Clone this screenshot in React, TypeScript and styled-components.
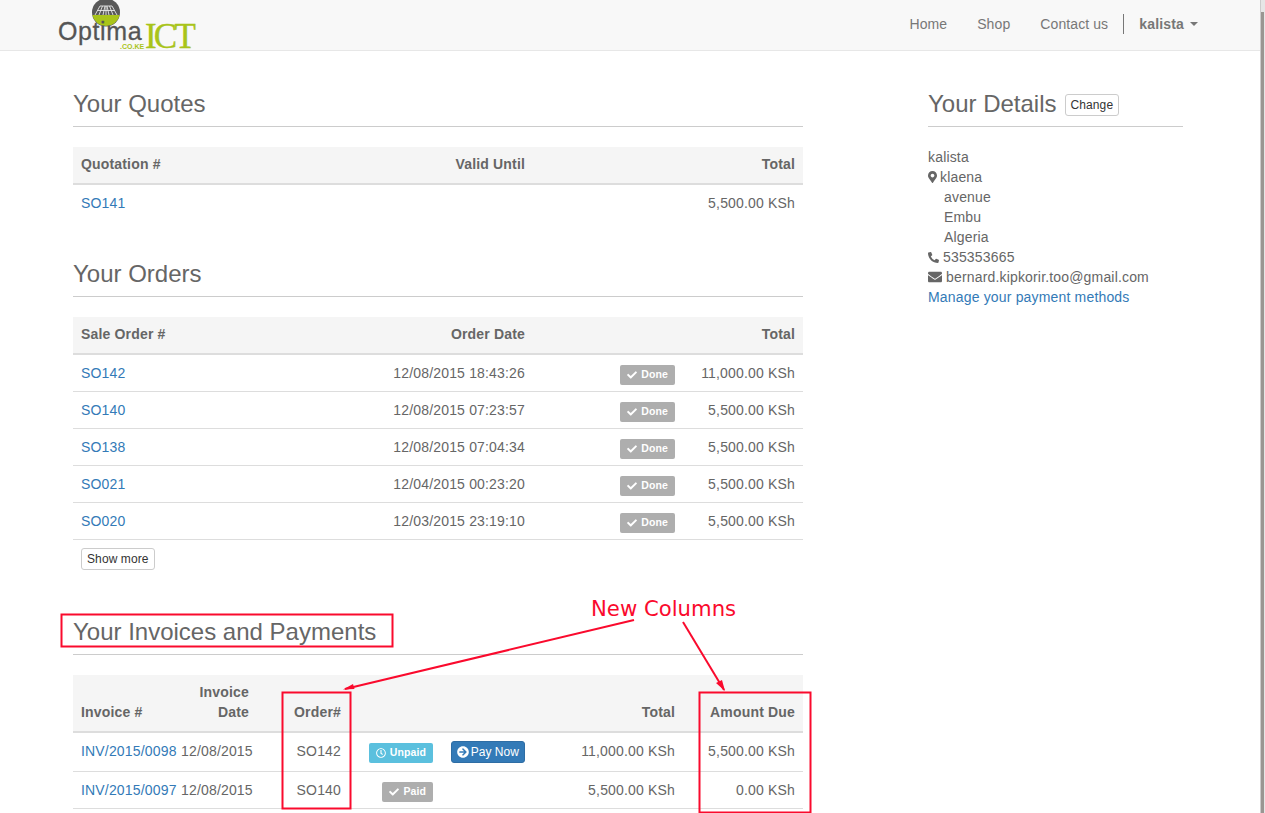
import styled, { createGlobalStyle } from 'styled-components';
import { FaCheck, FaRegClock, FaEnvelope, FaMapMarkerAlt, FaPhoneAlt, FaArrowCircleRight } from 'react-icons/fa';

const GlobalStyle = createGlobalStyle`
  html, body {
    margin: 0;
    height: 813px;
    overflow: hidden;
    background: #fff;
  }
  body {
    font-family: "Liberation Sans", Arial, sans-serif;
    font-size: 14px;
    line-height: 20px;
    letter-spacing: 0.17px;
    color: #666;
  }
  * { box-sizing: border-box; }
`;

const Page = styled.div`
  position: relative;
  width: 1265px;
  height: 813px;
  overflow: hidden;
`;

const Navbar = styled.nav`
  height: 51px;
  background: #f8f8f8;
  border-bottom: 1px solid #e7e7e7;
  display: flex;
  align-items: center;
  padding: 0 67px 0 57px;
  justify-content: space-between;
`;

const Brand = styled.div`
  position: relative;
  width: 140px;
  height: 50px;
`;

const BrandMain = styled.span`
  position: absolute;
  left: 1px;
  top: 19px;
  font-size: 25px;
  line-height: 24px;
  color: #555;
  letter-spacing: 0.6px;
  -webkit-text-stroke: 0.3px #555;
`;

const BrandIct = styled.span`
  position: absolute;
  left: 88px;
  top: 22px;
  font-family: "Liberation Serif", serif;
  font-size: 35px;
  line-height: 30px;
  letter-spacing: -2.8px;
  color: #a9c41a;
  -webkit-text-stroke: 0.4px #a9c41a;
`;

const BrandTld = styled.span`
  position: absolute;
  left: 63px;
  top: 43px;
  font-size: 7px;
  line-height: 7px;
  font-weight: bold;
  letter-spacing: 0;
  color: #a9c41a;
`;

const BrandMark = styled.svg`
  position: absolute;
  left: 34px;
  top: 0;
`;

const NavLinks = styled.div`
  display: flex;
  align-items: center;
  margin-bottom: 2px;
  color: #777;
`;

const NavLink = styled.a`
  margin-right: 30px;
  letter-spacing: 0.1px;
  color: #777;
  &:nth-child(3) { margin-right: 15px; }
`;

const UserMenu = styled.span`
  display: flex;
  align-items: center;
  height: 20px;
  border-left: 1px solid #777;
  padding-left: 15px;
  font-weight: bold;
  color: #777;
`;

const Caret = styled.span`
  margin-left: 6px;
  border-top: 4px solid #777;
  border-left: 4px solid transparent;
  border-right: 4px solid transparent;
`;

const Body = styled.div`
  display: flex;
  padding-left: 73px;
`;

const Main = styled.main`
  width: 730px;
`;

const Side = styled.aside`
  width: 255px;
  margin-left: 125px;
`;

const Heading = styled.h3`
  margin: 0;
  padding: 40px 0 9px;
  border-bottom: 1px solid #ccc;
  font-size: 24px;
  line-height: 26px;
  font-weight: 500;
  letter-spacing: 0;
  color: #666;
  display: flex;
  align-items: center;
  gap: 8px;
`;

const Table = styled.table`
  width: 730px;
  margin-top: 20px;
  border-collapse: collapse;
  table-layout: fixed;
`;

const HeadCell = styled.th<{ $left?: boolean }>`
  padding: 7px 8px 9px;
  background: #f5f5f5;
  border-bottom: 2px solid #ddd;
  vertical-align: bottom;
  text-align: ${(p) => (p.$left ? 'left' : 'right')};
  font-weight: bold;
  color: #666;
`;

const Cell = styled.td<{ $left?: boolean }>`
  padding: 8px;
  border-bottom: 1px solid #ddd;
  vertical-align: top;
  text-align: ${(p) => (p.$left ? 'left' : 'right')};
  white-space: nowrap;
`;

const PlainCell = styled(Cell)`
  border-bottom: none;
`;

const Link = styled.a`
  color: #337ab7;
`;

const Label = styled.span<{ $info?: boolean }>`
  display: inline-flex;
  align-items: center;
  gap: 4px;
  height: 20px;
  margin: 2px 0 -2px;
  padding: 0 7px 1px;
  border-radius: 2px;
  background: ${(p) => (p.$info ? '#5bc0de' : '#aeaeae')};
  color: #fff;
  font-size: 10.5px;
  font-weight: bold;
  line-height: 1;
  letter-spacing: 0.1px;
  vertical-align: top;
  svg { font-size: 10px; }
`;

const PayButton = styled.a`
  display: inline-flex;
  align-items: center;
  gap: 2px;
  height: 22px;
  padding: 0 5px;
  background: #337ab7;
  border: 1px solid #2e6da4;
  border-radius: 3px;
  color: #fff;
  font-size: 12px;
  line-height: 18px;
  letter-spacing: 0.05px;
  vertical-align: top;
  svg { font-size: 12px; }
`;

const SmallButton = styled.button`
  padding: 1px 5px;
  height: 22px;
  background: #fff;
  border: 1px solid #ccc;
  border-radius: 3px;
  font: 12px/18px "Liberation Sans", Arial, sans-serif;
  letter-spacing: 0.1px;
  color: #333;
`;

const ShowMore = styled(SmallButton)`
  display: block;
  margin: 8px 0 9px 8px;
`;

const ChangeButton = styled(SmallButton)`
  position: relative;
  top: 1px;
`;

const Details = styled.div`
  margin-top: 20px;
`;

const Line = styled.div<{ $indent?: boolean; $gap?: number }>`
  display: flex;
  align-items: center;
  gap: ${(p) => p.$gap ?? 4}px;
  padding-left: ${(p) => (p.$indent ? '16px' : '0')};
  height: 20px;
`;

const PinIcon = styled(FaMapMarkerAlt)`
  width: 9px;
  height: 12px;
`;

const PhoneIcon = styled(FaPhoneAlt)`
  width: 11px;
  height: 11px;
`;

const MailIcon = styled(FaEnvelope)`
  width: 14px;
  height: 14px;
`;

const Overlay = styled.svg`
  position: absolute;
  left: 0;
  top: 0;
  pointer-events: none;
`;

const Note = styled.span`
  position: absolute;
  left: 591px;
  top: 595px;
  font-family: "DejaVu Sans", sans-serif;
  font-size: 21.2px;
  line-height: 28px;
  letter-spacing: 0;
  color: #fa0a2d;
`;

const ScrollTrack = styled.div`
  position: absolute;
  right: 0;
  top: 0;
  width: 5px;
  height: 813px;
  background: #e6e6e6;
  border-left: 1px solid #ccc;
`;

const ScrollThumb = styled.div`
  margin: 12px 0 0 0;
  width: 3px;
  height: 801px;
  background: #9a9692;
`;

const orders = [
  ['SO142', '12/08/2015 18:43:26', '11,000.00 KSh'],
  ['SO140', '12/08/2015 07:23:57', '5,500.00 KSh'],
  ['SO138', '12/08/2015 07:04:34', '5,500.00 KSh'],
  ['SO021', '12/04/2015 00:23:20', '5,500.00 KSh'],
  ['SO020', '12/03/2015 23:19:10', '5,500.00 KSh'],
];

export default function App() {
  return (
    <Page>
      <GlobalStyle />
      <Navbar>
        <Brand>
          <BrandMark width="30" height="27" viewBox="0 0 30 27">
            <circle cx="15" cy="12.5" r="14" fill="#595959" />
            <path d="M1.3 15 H28.7 A14 14 0 0 1 1.3 15 Z" fill="#a9c41a" />
            <path d="M4 15 L9 6 H21 L26 15 M8 15 L11.5 6 M12 15 L14 6 M15 15 V6 M18 15 L16 6 M22 15 L18.5 6 M6.5 10.5 H23.5" stroke="#e8e8e8" strokeWidth="0.9" fill="none" />
          </BrandMark>
          <BrandMain>Optima</BrandMain>
          <BrandIct>ICT</BrandIct>
          <BrandTld>.CO.KE</BrandTld>
        </Brand>
        <NavLinks>
          <NavLink>Home</NavLink>
          <NavLink>Shop</NavLink>
          <NavLink>Contact us</NavLink>
          <UserMenu>
            kalista<Caret />
          </UserMenu>
        </NavLinks>
      </Navbar>

      <Body>
        <Main>
          <Heading>Your Quotes</Heading>
          <Table>
            <colgroup>
              <col style={{ width: 200 }} />
              <col style={{ width: 260 }} />
              <col />
            </colgroup>
            <thead>
              <tr>
                <HeadCell $left>Quotation #</HeadCell>
                <HeadCell>Valid Until</HeadCell>
                <HeadCell>Total</HeadCell>
              </tr>
            </thead>
            <tbody>
              <tr>
                <PlainCell $left><Link>SO141</Link></PlainCell>
                <PlainCell />
                <PlainCell>5,500.00 KSh</PlainCell>
              </tr>
            </tbody>
          </Table>

          <Heading>Your Orders</Heading>
          <Table>
            <colgroup>
              <col style={{ width: 200 }} />
              <col style={{ width: 260 }} />
              <col style={{ width: 150 }} />
              <col />
            </colgroup>
            <thead>
              <tr>
                <HeadCell $left>Sale Order #</HeadCell>
                <HeadCell>Order Date</HeadCell>
                <HeadCell />
                <HeadCell>Total</HeadCell>
              </tr>
            </thead>
            <tbody>
              {orders.map(([id, date, total]) => (
                <tr key={id}>
                  <Cell $left><Link>{id}</Link></Cell>
                  <Cell>{date}</Cell>
                  <Cell>
                    <Label><FaCheck />Done</Label>
                  </Cell>
                  <Cell>{total}</Cell>
                </tr>
              ))}
            </tbody>
          </Table>
          <ShowMore>Show more</ShowMore>

          <Heading>Your Invoices and Payments</Heading>
          <Table>
            <colgroup>
              <col style={{ width: 100 }} />
              <col style={{ width: 84 }} />
              <col style={{ width: 92 }} />
              <col style={{ width: 92 }} />
              <col style={{ width: 92 }} />
              <col style={{ width: 150 }} />
              <col />
            </colgroup>
            <thead>
              <tr>
                <HeadCell $left>Invoice #</HeadCell>
                <HeadCell>Invoice Date</HeadCell>
                <HeadCell>Order#</HeadCell>
                <HeadCell />
                <HeadCell />
                <HeadCell>Total</HeadCell>
                <HeadCell>Amount Due</HeadCell>
              </tr>
            </thead>
            <tbody>
              <tr>
                <Cell $left><Link>INV/2015/0098</Link></Cell>
                <Cell $left>12/08/2015</Cell>
                <Cell>SO142</Cell>
                <Cell><Label $info><FaRegClock />Unpaid</Label></Cell>
                <Cell><PayButton><FaArrowCircleRight />Pay Now</PayButton></Cell>
                <Cell>11,000.00 KSh</Cell>
                <Cell>5,500.00 KSh</Cell>
              </tr>
              <tr>
                <Cell $left><Link>INV/2015/0097</Link></Cell>
                <Cell $left>12/08/2015</Cell>
                <Cell>SO140</Cell>
                <Cell><Label><FaCheck />Paid</Label></Cell>
                <Cell />
                <Cell>5,500.00 KSh</Cell>
                <Cell>0.00 KSh</Cell>
              </tr>
            </tbody>
          </Table>
        </Main>

        <Side>
          <Heading>
            Your Details <ChangeButton>Change</ChangeButton>
          </Heading>
          <Details>
            <Line>kalista</Line>
            <Line $gap={3}><PinIcon />klaena</Line>
            <Line $indent>avenue</Line>
            <Line $indent>Embu</Line>
            <Line $indent>Algeria</Line>
            <Line><PhoneIcon />535353665</Line>
            <Line><MailIcon />bernard.kipkorir.too@gmail.com</Line>
            <Line><Link>Manage your payment methods</Link></Line>
          </Details>
        </Side>
      </Body>

      <Note>New Columns</Note>
      <Overlay width="1265" height="813" viewBox="0 0 1265 813">
        <g fill="none" stroke="#fa0a2d" strokeWidth="2">
          <rect x="61.5" y="614.5" width="331" height="32" />
          <rect x="282.5" y="692.5" width="68" height="116" />
          <rect x="699.5" y="692.5" width="111" height="120" />
          <path d="M634 620 L345 689" />
          <path d="M683 622 L724 690" />
        </g>
        <path d="M343 689.5 L353 684 L354.5 689 Z" fill="#fa0a2d" />
        <path d="M725 691 L716 683 L722 680 Z" fill="#fa0a2d" />
      </Overlay>
      <ScrollTrack><ScrollThumb /></ScrollTrack>
    </Page>
  );
}
